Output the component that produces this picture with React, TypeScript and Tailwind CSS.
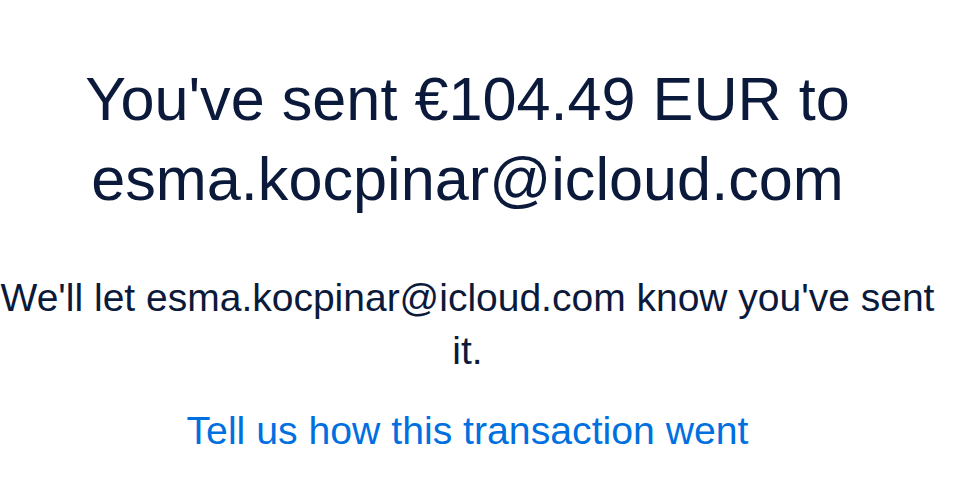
export default function App() {
  return (
    <div
      className="w-[963px] h-[495px] bg-white overflow-hidden text-[#0b1a3b] text-center"
      style={{ fontFamily: '"Liberation Sans", Arial, sans-serif' }}
    >
      <div className="w-[935px] flex flex-col items-center pt-[59px]">
        <h1 className="text-[61.2px] leading-[80px] font-normal">
          You've sent €104.49 EUR to
          <br />
          esma.kocpinar@icloud.com
        </h1>
        <p className="mt-[52px] text-[39px] leading-[53px]">
          We'll let esma.kocpinar@icloud.com know you've sent it.
        </p>
        <a href="#" className="mt-[27px] text-[39.2px] leading-[53px] text-[#0070e0]">
          Tell us how this transaction went
        </a>
      </div>
    </div>
  );
}
